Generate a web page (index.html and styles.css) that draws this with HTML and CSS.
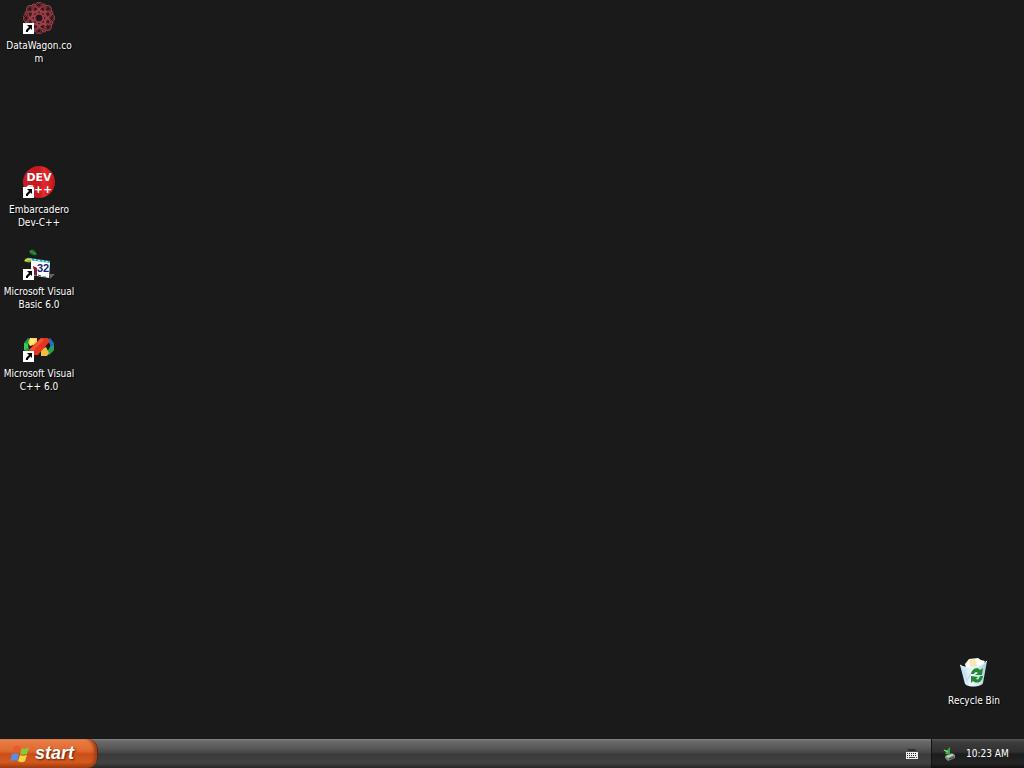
FILE: index.html
```html
<!DOCTYPE html>
<html lang="en">
<head>
    <meta charset="UTF-8">
    <meta name="viewport" content="width=device-width, initial-scale=1.0">
    <title>Desktop</title>
    <link rel="stylesheet" href="styles.css">
</head>
<body>

    <!-- Shared symbols -->
    <svg class="symbols" aria-hidden="true">
        <symbol id="arrow" viewBox="0 0 11 11">
            <rect width="11" height="11" fill="#fff"/>
            <path d="M4 2h5v5L7.500 5.500L5 8v1H3V7l3-3z" fill="#000"/>
        </symbol>
    </svg>

    <main class="desktop">
        <div class="icons">
            <button type="button" class="icon">
                <svg viewBox="0 0 32 32">
                    <circle cx="16" cy="16" r="13" fill="#3a1c20"/>
                    <g fill="none" stroke="#a5404a">
                        <ellipse cx="16" cy="16" rx="16" ry="7"/>
                        <ellipse cx="16" cy="16" rx="16" ry="7" transform="rotate(45 16 16)"/>
                        <ellipse cx="16" cy="16" rx="16" ry="7" transform="rotate(90 16 16)"/>
                        <ellipse cx="16" cy="16" rx="16" ry="7" transform="rotate(135 16 16)"/>
                        <ellipse cx="16" cy="16" rx="15" ry="4" transform="rotate(22 16 16)"/>
                        <ellipse cx="16" cy="16" rx="15" ry="4" transform="rotate(67 16 16)"/>
                        <ellipse cx="16" cy="16" rx="15" ry="4" transform="rotate(112 16 16)"/>
                        <ellipse cx="16" cy="16" rx="15" ry="4" transform="rotate(157 16 16)"/>
                        <path d="M5 5h22v22H5zM16 1l15 15-15 15L1 16z" stroke="#752d36"/>
                    </g>
                    <circle cx="16" cy="16" r="3" fill="#241619"/>
                    <use href="#arrow" y="21" width="11" height="11"/>
                </svg>
                <span>DataWagon.co<br>m</span>
            </button>

            <button type="button" class="icon dev">
                <svg viewBox="0 0 32 32">
                    <defs>
                        <linearGradient id="red" x1="0" x2="1">
                            <stop offset="0" stop-color="#c91c20"/>
                            <stop offset="0.5" stop-color="#c51a1e"/>
                            <stop offset="0.65" stop-color="#e8282c"/>
                            <stop offset="1" stop-color="#bf181c"/>
                        </linearGradient>
                    </defs>
                    <circle cx="16" cy="16" r="16" fill="url(#red)"/>
                    <text class="badge-text"><tspan x="16" y="15">DEV</tspan><tspan x="16" y="27">C++</tspan></text>
                    <use href="#arrow" y="21" width="11" height="11"/>
                </svg>
                <span>Embarcadero Dev-C++</span>
            </button>

            <button type="button" class="icon">
                <svg viewBox="0 0 32 32">
                    <path d="M6 4c2-4 6-3 8 3-4 1-6 0-8-3z" fill="#176b2b"/>
                    <path d="M7 3l6 3" stroke="#41a850"/>
                    <path d="M1 13c2-4 6-4 9-1-2 3-5 3-9 1z" fill="#91b92d"/>
                    <path d="M2 13c3-2 5-2 7-1" stroke="#e4ec67" fill="none"/>
                    <path d="M8 12l19 2-1 16-18-3z" fill="#fff"/>
                    <path d="M7 11l20 3" stroke="#20a9ad" stroke-width="2"/>
                    <path d="M7 11l20 3" stroke="#d6ffff" stroke-dasharray="2 2"/>
                    <path d="M10 18l4 2v8l-3-1z" fill="#8b1730"/>
                    <path d="M15 27l3 1M20 29l3 0" stroke="#2a4960"/>
                    <path d="M26 26l6 0-5 5z" fill="#62666a"/>
                    <text x="20" y="24" class="number-text">32</text>
                    <use href="#arrow" y="21" width="11" height="11"/>
                </svg>
                <span>Microsoft Visual Basic 6.0</span>
            </button>

            <button type="button" class="icon">
                <svg viewBox="0 0 32 32">
                    <path d="M5 8L1 13v7l3 3 2-3-1-7 4-3z" fill="#209c3d"/>
                    <path d="M1 13l4 1v4l-4 2z" fill="#39c857"/>
                    <path d="M27 8l4 5v7l-5 5-2-3 3-4v-4l-3-3z" fill="#236cc8"/>
                    <path d="M27 17l4-2v5l-5 5-2-3z" fill="#27a44a"/>
                    <path d="M7 8h7v6l-7 2-2-3z" fill="#f3d052"/>
                    <path d="M7 8l7 2-7 6z" fill="#ffe979"/>
                    <path d="M18 19l5-2 3 6-2 3h-6z" fill="#efbd3e"/>
                    <path d="M18 8h7l2 3-12 14H8l-2-5z" fill="#e53420"/>
                    <path d="M18 8l3 2L10 21l-4-1z" fill="#f6502e"/>
                    <use href="#arrow" y="21" width="11" height="11"/>
                </svg>
                <span>Microsoft Visual C++ 6.0</span>
            </button>
        </div>

        <button type="button" class="icon recycle-bin">
            <svg viewBox="0 0 32 32">
                <defs>
                    <linearGradient id="bin" x1="0" x2="1">
                        <stop offset="0" stop-color="#b5e1f3"/>
                        <stop offset="0.45" stop-color="#edf7fc"/>
                        <stop offset="1" stop-color="#a9cede"/>
                    </linearGradient>
                </defs>
                <path d="M7 7l4-5 9-1 7 5-3 9H9z" fill="#fffdf0"/>
                <path d="M11 3l6-1 3 9-7 1z" fill="#f6e7ba"/>
                <path d="M19 2l8 2-5 7z" fill="#fff"/>
                <path d="M2 8c5 4 19 4 27-4l-4 22c-1 4-14 5-18 1z" fill="url(#bin)"/>
                <path d="M2 8c5 4 19 4 27-4" stroke="#eefaff" fill="none"/>
                <path d="M6 13l3 11 4-8" stroke="#cfd0ec" fill="none"/>
                <path d="M13 17c1-6 7-7 9-4l3-2-1 7-7 0 3-2c-2-2-3-1-4 1z" fill="#218a30"/>
                <path d="M25 19c-1 7-7 8-10 5l-2 2v-7l7 1-2 2c2 1 3 0 4-3z" fill="#218a30"/>
            </svg>
            <span>Recycle Bin</span>
        </button>
    </main>

    <footer class="taskbar">
        <button type="button" class="start">
            <svg viewBox="0 0 20 20">
                <path d="M4 3c3-2 5-1 7 0L9 9C7 8 5 8 2 9z" fill="#e95b24"/>
                <path d="M12 4c2 1 4 1 7-1l-2 7c-3 1-5 1-7 0z" fill="#83cb38"/>
                <path d="M2 10c3-1 5-1 7 0l-2 7c-2-1-4-1-7 0z" fill="#5b8de5"/>
                <path d="M10 11c2 1 4 1 7 0l-2 6c-3 2-5 1-7 0z" fill="#f6d43c"/>
            </svg>
            <span>start</span>
        </button>
        <button type="button" class="keyboard" aria-label="Keyboard">
            <svg viewBox="0 0 12 12">
                <path d="M2 1q2 2 4 1t4 1" stroke="#111" fill="none"/>
                <rect y="4" width="12" height="7" fill="#eee"/>
                <path d="M1 5.500h10M1 7.500h10" stroke="#222" stroke-dasharray="1 1"/>
                <path d="M1 9.500h1M3 9.500h6M10 9.500h1" stroke="#444"/>
            </svg>
        </button>
        <div class="tray">
            <svg viewBox="0 0 14 14">
                <path d="M3 9l7-3 3 2v3l-7 3-3-3z" fill="#7e8981"/>
                <path d="M4 9l6-2 2 1-6 3z" fill="#c5cdc7"/>
                <path d="M7 12l5-2" stroke="#313833"/>
                <path d="M1 3l4 0 3-3 0 8-5-1 1-2z" fill="#36ad3d"/>
                <path d="M2 3l4 2" stroke="#91e38a"/>
            </svg>
            <time datetime="10:23">10:23 AM</time>
        </div>
    </footer>

</body>
</html>
```

FILE: styles.css
```css
* {
    box-sizing: border-box;
}

body {
    display: flex;
    flex-direction: column;
    min-height: 100vh;
    margin: 0;
    background-color: #1a1a1a;
    color: #fff;
    font-family: "DejaVu Sans Condensed", Tahoma, sans-serif;
    font-size: 10px;
}

button {
    padding: 0;
    border: 0;
    background: none;
    color: inherit;
    font: inherit;
}

.symbols {
    position: absolute;
    width: 0;
    height: 0;
}

/* Desktop */
.desktop {
    position: relative;
    flex: 1;
}

.icons {
    display: flex;
    flex-direction: column;
    padding-top: 2px;
}

.icon {
    display: flex;
    flex-direction: column;
    align-items: center;
    gap: 5px;
    width: 78px;
    height: 82px;
    line-height: 13px;
    text-align: center;
    text-shadow: 1px 1px 1px #000;
}

.icon svg {
    width: 32px;
    height: 32px;
}

.icon span {
    width: 100%;
}

/* One empty row above */
.dev {
    margin-top: 82px;
}

.badge-text {
    fill: #fff;
    font: bold 11px "DejaVu Sans", sans-serif;
    text-anchor: middle;
    text-shadow: none;
}

.number-text {
    fill: #17247d;
    font: bold 11px "Liberation Sans", sans-serif;
    text-anchor: middle;
    text-shadow: none;
}

.recycle-bin {
    position: absolute;
    right: 11px;
    bottom: 0;
}

/* Taskbar */
.taskbar {
    display: flex;
    height: 29px;
    background: linear-gradient(#858585, #6a6a6a 2px, #5c5c5c 8px, #454545 14px, #393939 15px, #424242 24px, #262626);
}

.start {
    display: flex;
    align-items: center;
    gap: 5px;
    width: 98px;
    padding-left: 10px;
    border-right: 1px solid #522a16;
    border-radius: 0 10px 10px 0;
    background: linear-gradient(#f2a071, #e8783e 3px, #df6831 12px, #c94e18 15px, #d4591f 23px, #9b390e);
    box-shadow: inset -3px 0 3px #a24016;
    font: italic bold 18px "Liberation Sans", sans-serif;
    text-shadow: 1px 1px 2px #602206;
}

.start svg {
    width: 20px;
    height: 20px;
}

.keyboard {
    width: 12px;
    margin-left: auto;
    margin-right: 13px;
}

.keyboard svg {
    display: block;
    width: 12px;
    height: 12px;
}

.tray {
    display: flex;
    align-items: center;
    gap: 10px;
    min-width: 93px;
    padding: 0 13px 0 10px;
    border-left: 1px solid #111;
    background: linear-gradient(#555, #3c3c3c 3px, #303030 13px, #1c1c1c 15px, #242424 24px, #111);
}

.tray svg {
    width: 14px;
    height: 14px;
}
```
